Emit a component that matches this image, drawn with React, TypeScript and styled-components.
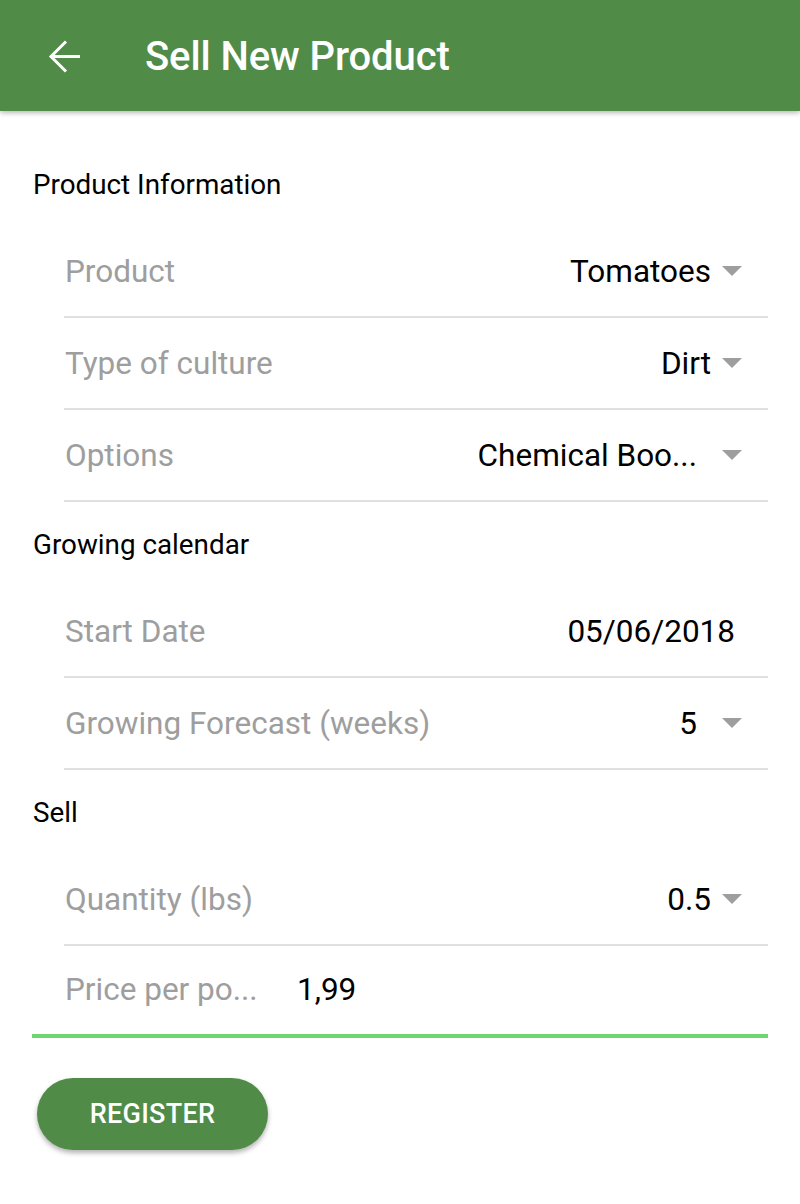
import React from "react";
import styled, { createGlobalStyle } from "styled-components";

const Global = createGlobalStyle`
  html, body { margin: 0; padding: 0; background: #ffffff; }
  body { font-family: Roboto, "Noto Sans", Arial, sans-serif; -webkit-font-smoothing: antialiased; }
  * { box-sizing: border-box; }
`;

const GREEN = "#508c47";

const Page = styled.div`
  width: 800px;
  min-height: 1204px;
  background: #fff;
`;

const AppBar = styled.header`
  height: 111px;
  background: ${GREEN};
  display: flex;
  align-items: center;
  padding-left: 48px;
  box-shadow: 0 2px 5px rgba(0, 0, 0, 0.28);
  position: relative;
  z-index: 1;
`;

const BackButton = styled.button`
  width: 33px;
  height: 33px;
  padding: 0;
  border: none;
  background: transparent;
  display: flex;
  align-items: center;
  justify-content: center;
  margin-right: 64px;
  margin-top: 1px;
`;

const Title = styled.h1`
  margin: 0;
  color: #fff;
  font-family: Roboto, sans-serif;
  font-weight: 500;
  font-size: 40px;
  letter-spacing: -0.1px;
  margin-top: 2px;
`;

const Content = styled.main`
  padding: 31px 32px 0 32px;
`;

const SectionTitle = styled.div`
  height: 84px;
  display: flex;
  align-items: center;
  font-size: 27.8px;
  color: #000;
  padding-left: 1px;
`;

const Row = styled.div`
  margin-left: 32px;
  height: 92px;
  border-bottom: 2px solid #e0e0e0;
  display: flex;
  align-items: center;
  justify-content: space-between;
  padding-left: 1px;
`;

const Label = styled.span`
  font-size: 31.5px;
  color: #9e9e9e;
  white-space: nowrap;
`;

const ValueWrap = styled.div<{ $extra?: number; $noArrow?: boolean }>`
  display: flex;
  align-items: center;
  padding-right: ${(p) => (p.$noArrow ? 33 : 26)}px;
  gap: ${(p) => 11 + (p.$extra || 0)}px;
`;

const Value = styled.span`
  font-size: 31.5px;
  color: #000;
  white-space: nowrap;
`;

const Caret = () => (
  <svg width="20" height="10" viewBox="0 0 20 10">
    <polygon points="0,0 20,0 10,10" fill="#9e9e9e" />
  </svg>
);

const InputRow = styled.div`
  height: 92px;
  border-bottom: 4px solid #6cd670;
  display: flex;
  align-items: center;
  padding-left: 33px;
  padding-bottom: 2px;
`;

const InputLabel = styled(Label)`
  width: 232px;
`;

const Footer = styled.div`
  padding: 40px 0 0 5px;
`;

const RegisterButton = styled.button`
  width: 231px;
  height: 72px;
  border: none;
  border-radius: 36px;
  background: ${GREEN};
  color: #fff;
  font-family: Roboto, sans-serif;
  font-weight: 500;
  font-size: 27px;
  letter-spacing: 0.3px;
  box-shadow: 0 3px 5px rgba(0, 0, 0, 0.3);
`;

type Field = { label: string; value: string; extra?: number; noArrow?: boolean };

const sections: { title: string; fields: Field[] }[] = [
  {
    title: "Product Information",
    fields: [
      { label: "Product", value: "Tomatoes" },
      { label: "Type of culture", value: "Dirt" },
      { label: "Options", value: "Chemical Boo...", extra: 14 },
    ],
  },
  {
    title: "Growing calendar",
    fields: [
      { label: "Start Date", value: "05/06/2018", noArrow: true },
      { label: "Growing Forecast (weeks)", value: "5", extra: 14 },
    ],
  },
  {
    title: "Sell",
    fields: [{ label: "Quantity (lbs)", value: "0.5" }],
  },
];

export default function App() {
  return (
    <Page>
      <Global />
      <AppBar>
        <BackButton aria-label="Back">
          <svg width="33" height="33" viewBox="0 0 33 33" fill="none">
            <path d="M2 16.5 H32" stroke="#fff" strokeWidth="3" />
            <path d="M18 1.5 L3 16.5 L18 31.5" stroke="#fff" strokeWidth="3" />
          </svg>
        </BackButton>
        <Title>Sell New Product</Title>
      </AppBar>
      <Content>
        {sections.map((s) => (
          <section key={s.title}>
            <SectionTitle>{s.title}</SectionTitle>
            {s.fields.map((f) => (
              <Row key={f.label}>
                <Label>{f.label}</Label>
                <ValueWrap $extra={f.extra} $noArrow={f.noArrow}>
                  <Value>{f.value}</Value>
                  {!f.noArrow && <Caret />}
                </ValueWrap>
              </Row>
            ))}
          </section>
        ))}
        <InputRow>
          <InputLabel>Price per po...</InputLabel>
          <Value>1,99</Value>
        </InputRow>
        <Footer>
          <RegisterButton>REGISTER</RegisterButton>
        </Footer>
      </Content>
    </Page>
  );
}
